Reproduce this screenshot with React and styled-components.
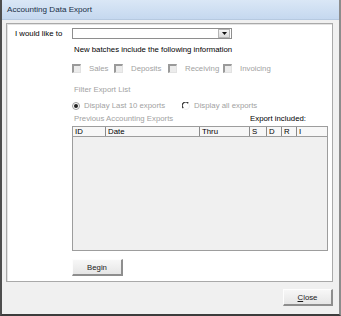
import React from 'react';
import styled, { createGlobalStyle } from 'styled-components'

const Global = createGlobalStyle`
  html, body { margin: 0; padding: 0; background: #f0f0f0; }
  body { font-family: "Liberation Sans", Arial, sans-serif; }
`

export const Window = styled.div`
  box-sizing: border-box;
  width: 341px;
  height: 316px;
  background: #f0f0f0;
  border-left: 2px solid #4e4e4e;
  border-right: 2px solid #8c8c8c;
  border-bottom: 2px solid #3c3c3c;
  display: flex;
  flex-direction: column;
`
export const TitleBar = styled.div`
  height: 20px;
  padding-left: 5px;
  display: flex;
  align-items: center;
  background: linear-gradient(#dae7f6, #c5d8ef);
  color: #1a2f47;
  font-size: 8.1px;
  border-bottom: 1px solid #b6c9e0;
  box-sizing: border-box;
`
export const Body = styled.div`
  flex: 1;
  padding: 3px 6px 0 4px;
  display: flex;
  flex-direction: column;
`
export const Panel = styled.div`
  box-sizing: border-box;
  height: 259px;
  background: #fff;
  border: 1px solid #a9a9a9;
  box-shadow: inset 1px 1px 0 #e3e3e3;
  padding: 4px 0 0 8px;
  display: flex;
  flex-direction: column;
  font-size: 7.8px;
`
export const Row = styled.div`
  display: flex;
  align-items: center;
`
export const Label = styled.div`
  width: 57px;
  line-height: 11px;
  color: #000;
`
export const Select = styled.div`
  box-sizing: border-box;
  width: 160px;
  height: 11px;
  border: 1px solid #8e8e8e;
  background: #fff;
  display: flex;
  justify-content: flex-end;
  align-items: center;
  padding-right: 1px;
`
export const Arrow = styled.div`
  width: 10px;
  height: 7px;
  background: linear-gradient(#f4f4f4, #dcdcdc);
  border: 1px solid #b5b5b5;
  display: flex;
  align-items: center;
  justify-content: center;
`
export const Content = styled.div`
  margin-left: 57px;
  display: flex;
  flex-direction: column;
`
export const Text = styled.div`
  line-height: 10px;
  margin-top: ${p => p.mt || 0}px;
  margin-left: ${p => p.ml || 0}px;
  color: ${p => p.dim ? '#a2a2a2' : '#000'};
  white-space: nowrap;
`
export const CheckRow = styled.div`
  margin-top: 9px;
  display: grid;
  grid-template-columns: 42px 54px 55px auto;
  height: 9px;
`
export const CheckItem = styled.div`
  display: flex;
  align-items: center;
  color: #a2a2a2;
  line-height: 9px;
`
export const Box = styled.span`
  box-sizing: border-box;
  width: 9px;
  height: 9px;
  margin-right: 8px;
  border-top: 2px solid #9a9a9a;
  border-left: 2px solid #9a9a9a;
  border-right: 1px solid #e2e2e2;
  border-bottom: 1px solid #e2e2e2;
  background: #ececec;
`
export const RadioRow = styled.div`
  margin-top: 6px;
  display: grid;
  grid-template-columns: 110px auto;
  height: 8px;
`
export const RadioItem = styled.div`
  display: flex;
  align-items: center;
  color: #a2a2a2;
  gap: 4px;
`
export const HeadRow = styled.div`
  margin-top: 5px;
  width: 256px;
  display: flex;
  justify-content: space-between;
  padding-right: 22px;
  box-sizing: border-box;
`
export const Table = styled.div`
  box-sizing: border-box;
  margin-top: 2px;
  width: 256px;
  height: 125px;
  border: 1px solid #9d9d9d;
  background: #f0f0f0;
  display: flex;
  flex-direction: column;
`
export const Header = styled.div`
  display: grid;
  grid-template-columns: 33px 94px 50px 17px 15px 15px auto;
  height: 9px;
  background: #f7f7f7;
  border-bottom: 1px solid #9d9d9d;
`
export const Col = styled.div`
  line-height: 9px;
  padding-left: 2px;
  border-right: ${p => p.last ? 'none' : '1px solid #8a8a8a'};
  color: #000;
`
export const Button = styled.button`
  box-sizing: border-box;
  width: ${p => p.w}px;
  height: 17px;
  margin-top: ${p => p.mt || 0}px;
  padding: 0;
  font-family: "Liberation Sans", Arial, sans-serif;
  font-size: 7.8px;
  color: #1a1a1a;
  background: linear-gradient(#f7f7f7, #e6e6e6);
  border-top: 1px solid #fdfdfd;
  border-left: 1px solid #fdfdfd;
  border-right: 2px solid #8e8e8e;
  border-bottom: 2px solid #8e8e8e;
  u { text-decoration: underline; }
`
export const Footer = styled.div`
  display: flex;
  justify-content: flex-end;
  margin-top: 7px;
`

const Radio = ({ checked }) => (
  <svg width="8" height="8" viewBox="0 0 8 8">
    <circle cx="4" cy="4" r="3.5" fill="#fff" stroke={checked ? '#9a9a9a' : '#eee'} />
    {!checked && <path d="M1.2 6 A3.3 3.3 0 0 1 6.2 1.2" fill="none" stroke="#333" strokeWidth="1.3" />}
    {checked && <circle cx="4" cy="4" r="2" fill="#222" />}
  </svg>
)

const Check = ({ label }) => (
  <CheckItem><Box />{label}</CheckItem>
)

const App = () => {
  return (
    <>
      <Global />
      <Window>
        <TitleBar>Accounting Data Export</TitleBar>
        <Body>
          <Panel>
            <Row>
              <Label>I would like to</Label>
              <Select>
                <Arrow>
                  <svg width="5" height="3" viewBox="0 0 5 3"><path d="M0 0H5L2.5 3Z" fill="#111" /></svg>
                </Arrow>
              </Select>
            </Row>
            <Content>
              <Text mt={6} ml={2}>New batches include the following information</Text>
              <CheckRow>
                <Check label="Sales" />
                <Check label="Deposits" />
                <Check label="Receiving" />
                <Check label="Invoicing" />
              </CheckRow>
              <Text mt={12} ml={2} dim>Filter Export List</Text>
              <RadioRow>
                <RadioItem><Radio checked />Display Last 10 exports</RadioItem>
                <RadioItem><Radio />Display all exports</RadioItem>
              </RadioRow>
              <HeadRow>
                <Text ml={2} dim>Previous Accounting Exports</Text>
                <Text>Export included:</Text>
              </HeadRow>
              <Table>
                <Header>
                  <Col>ID</Col>
                  <Col>Date</Col>
                  <Col>Thru</Col>
                  <Col>S</Col>
                  <Col>D</Col>
                  <Col>R</Col>
                  <Col last>I</Col>
                </Header>
              </Table>
              <Button w={51} mt={8}>Begin</Button>
            </Content>
          </Panel>
          <Footer>
            <Button w={50}><u>C</u>lose</Button>
          </Footer>
        </Body>
      </Window>
    </>
  )
}

export default App;
